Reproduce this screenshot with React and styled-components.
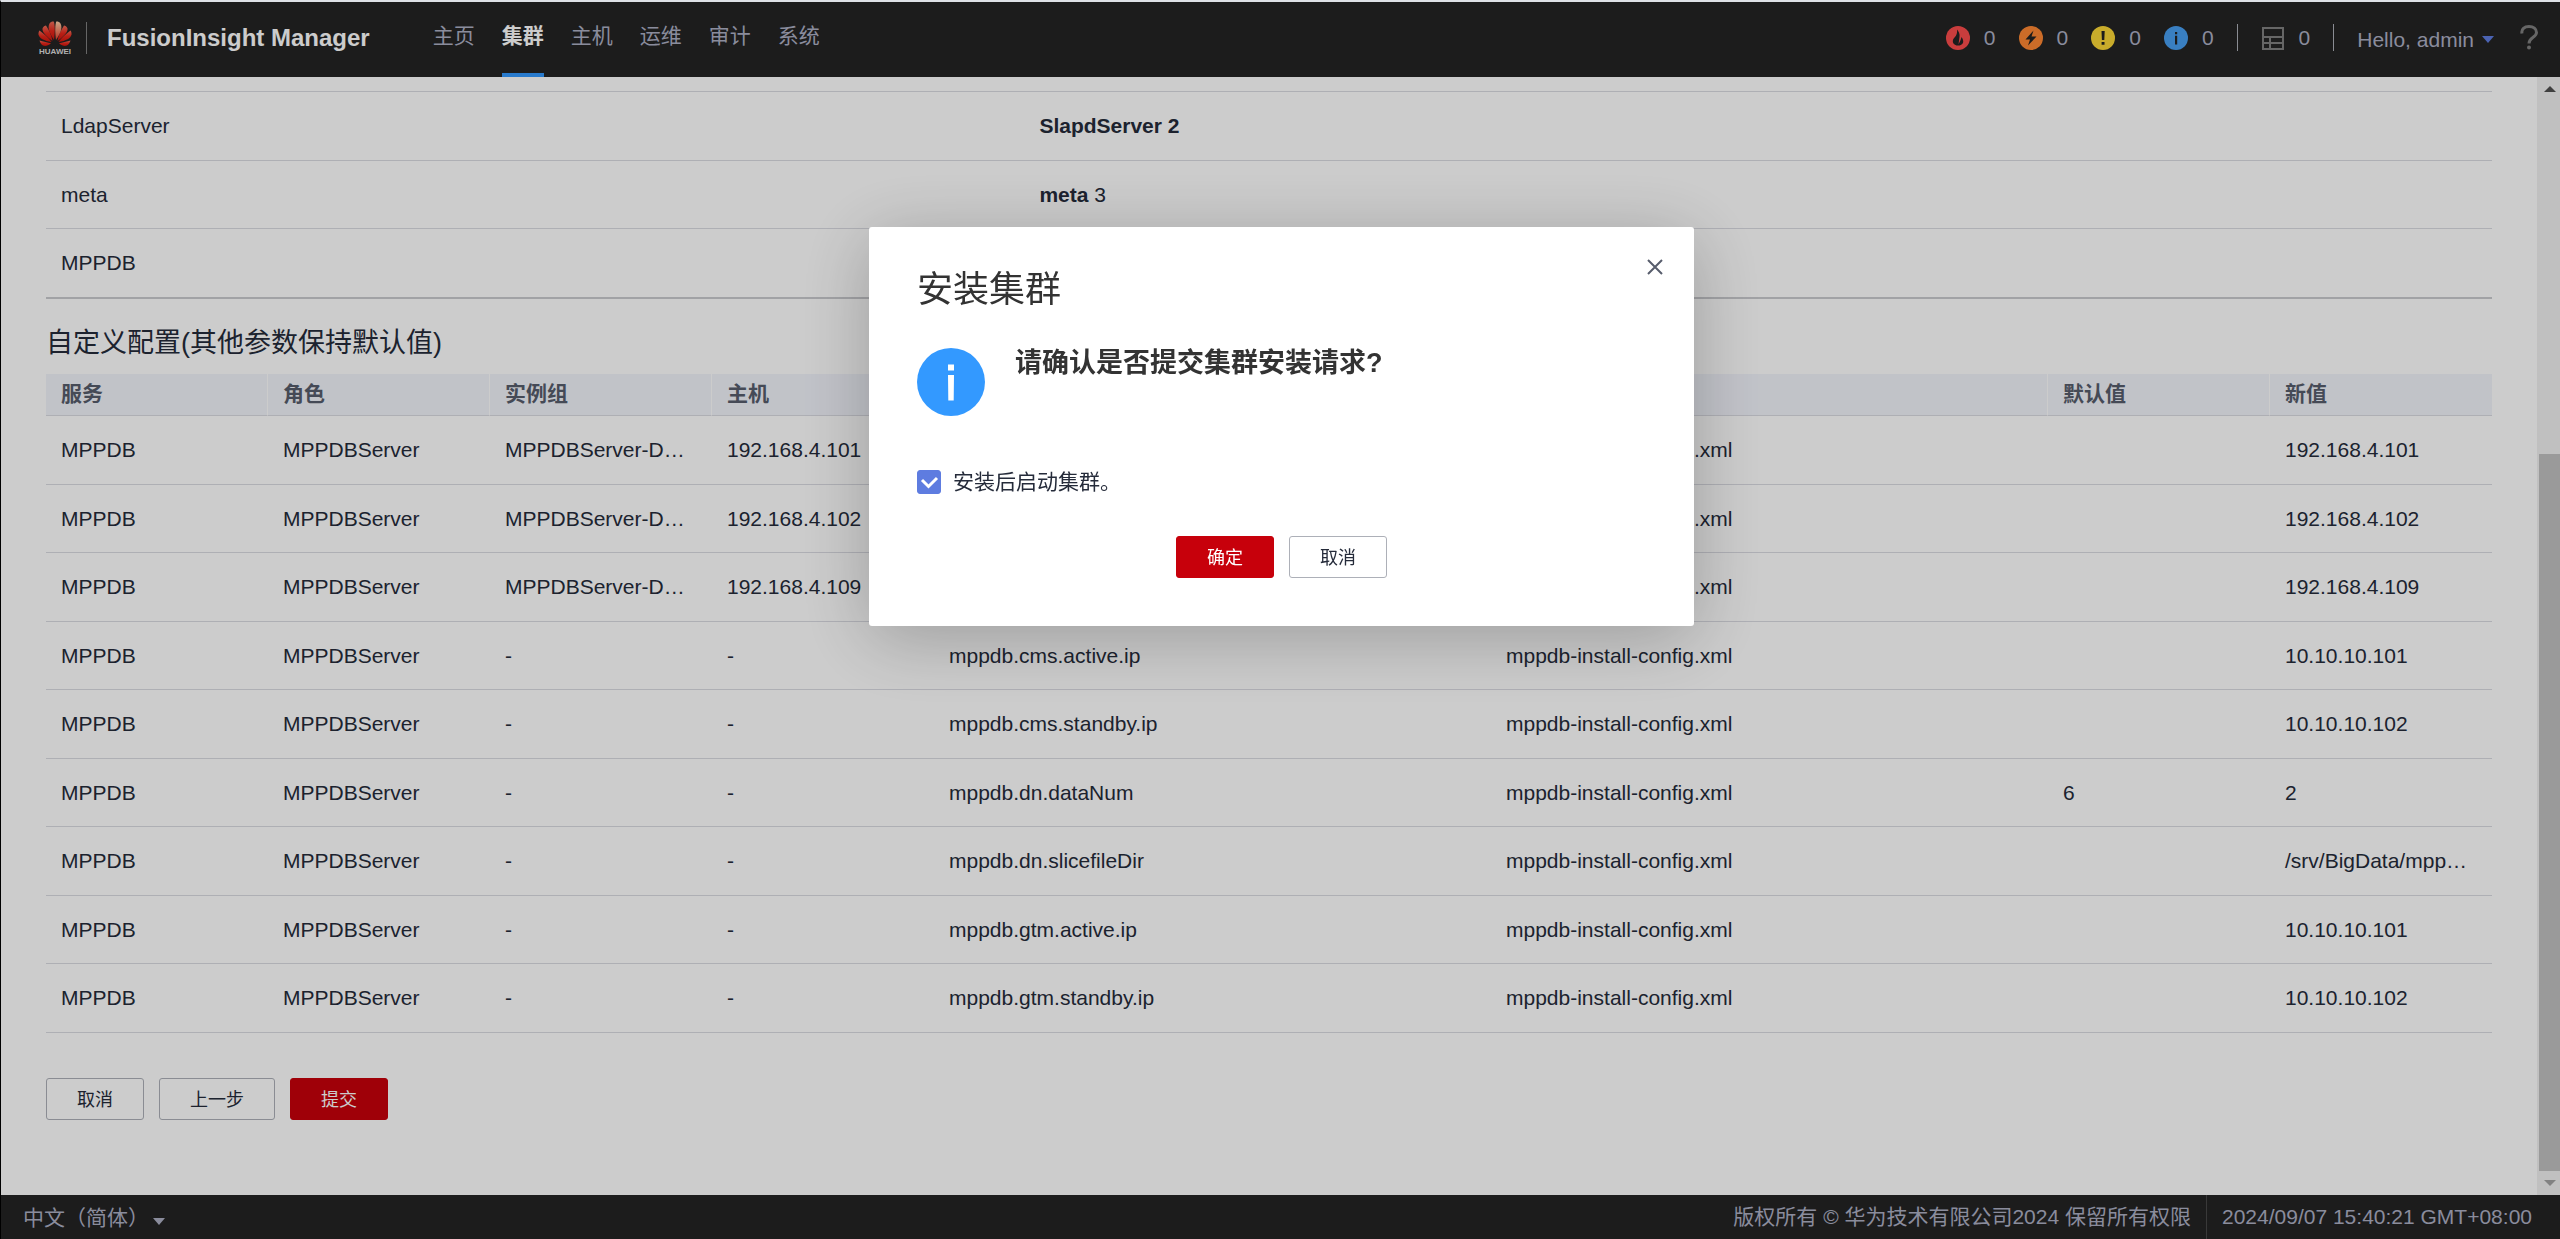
import React, { useState } from "react";
import styled, { createGlobalStyle } from "styled-components";

const navItems = ["主页", "集群", "主机", "运维", "审计", "系统"];

const columns = ["服务", "角色", "实例组", "主机", "", "", "默认值", "新值"];

const file = "mppdb-install-config.xml";

const configs = [
    ["MPPDBServer-D…", "192.168.4.101", "", "", "192.168.4.101"],
    ["MPPDBServer-D…", "192.168.4.102", "", "", "192.168.4.102"],
    ["MPPDBServer-D…", "192.168.4.109", "", "", "192.168.4.109"],
    ["-", "-", "mppdb.cms.active.ip", "", "10.10.10.101"],
    ["-", "-", "mppdb.cms.standby.ip", "", "10.10.10.102"],
    ["-", "-", "mppdb.dn.dataNum", "6", "2"],
    ["-", "-", "mppdb.dn.slicefileDir", "", "/srv/BigData/mpp…"],
    ["-", "-", "mppdb.gtm.active.ip", "", "10.10.10.101"],
    ["-", "-", "mppdb.gtm.standby.ip", "", "10.10.10.102"],
];

const Logo = () => (
    <svg width="34" height="34" viewBox="0 0 34 34" aria-label="HUAWEI">
        <defs>
            <linearGradient id="petal" x1="0" y1="0" x2="0" y2="1">
                <stop offset="0" stopColor="#f0705c" />
                <stop offset="0.5" stopColor="#e8281c" />
                <stop offset="1" stopColor="#d0140c" />
            </linearGradient>
            <linearGradient id="petalLight" x1="0" y1="0" x2="0" y2="1">
                <stop offset="0" stopColor="#ffd0a8" />
                <stop offset="1" stopColor="#e8402c" />
            </linearGradient>
        </defs>
        <g fill="url(#petal)">
            <path d="M16 19C12 13 9 7 11.500 2.500C13 0.500 15.500 0 16 1C17 5 17 12 16 19Z" />
            <path d="M14.500 20C8 15 4 11 4.500 7.500C5 5.500 7 4.500 8 4.500C11 9 13.500 14 14.500 20Z" />
            <path d="M19.500 20C26 15 30 11 29.500 7.500C29 5.500 27 4.500 26 4.500C23 9 20.500 14 19.500 20Z" />
            <path d="M13.500 21C6 20 1 17 0.500 13.500C0.300 11.500 1 10 1.500 9.500C6 13 11 17 13.500 21Z" />
            <path d="M20.500 21C28 20 33 17 33.500 13.500C33.700 11.500 33 10 32.500 9.500C28 13 23 17 20.500 21Z" />
            <path d="M13 22.300C10 25 7 25.500 5 24.500C3 23.500 2 21 1.500 19.500C5 20.500 10 21.500 13 22.300Z" />
            <path d="M21 22.300C24 25 27 25.500 29 24.500C31 23.500 32 21 32.500 19.500C29 20.500 24 21.500 21 22.300Z" />
        </g>
        <path
            d="M18 19C22 13 25 7 22.500 2.500C21 0.500 18.500 0 18 1C17 5 17 12 18 19Z"
            fill="url(#petalLight)"
        />
        <text x="17" y="33" textAnchor="middle" fontSize="8" fontWeight="700" fill="#dddddd">
            HUAWEI
        </text>
    </svg>
);

const alarms = [
    {
        name: "紧急",
        color: "#fc4d4d",
        glyph: (
            <path
                d="M11 3.500C13 6 14 8 13.500 11L12.500 18.500C13.500 16 15 14 15.500 11C18.500 15 17.500 18.500 13.500 19.500H10.500C6 18 6 14 8.500 11.500C10.500 9.500 11.500 7 11 3.500Z"
                fill="#232323"
            />
        ),
    },
    {
        name: "重要",
        color: "#ff8833",
        glyph: <path d="M14.500 4.500L6.500 13.500H11L9 19.500L17.500 10.500H12.500Z" fill="#232323" />,
    },
    {
        name: "次要",
        color: "#fcd836",
        glyph: (
            <path d="M10.500 5H13.700L13.300 14H10.900ZM10.600 16H13.500V18.800H10.600Z" fill="#232323" />
        ),
    },
    {
        name: "提示",
        color: "#489ff2",
        glyph: <path d="M11 6H13.200V8.200H11ZM11 9.800H13.200V18.500H11Z" fill="#232323" />,
    },
];

const Caret = ({ color }) => (
    <svg width="12" height="7" viewBox="0 0 12 7" aria-hidden="true">
        <path d="M0 0H12L6 7Z" fill={color} />
    </svg>
);

const App = () => {
    const [open, setOpen] = useState(true);
    const [start, setStart] = useState(true);

    return (
        <Page>
            <GlobalStyle />
            <Header>
                <Brand>
                    <Logo />
                    <BrandLine />
                    <h1>FusionInsight Manager</h1>
                </Brand>
                <Nav>
                    {navItems.map((item) => (
                        <NavLink key={item} href="#" $active={item === "集群"}>
                            {item}
                        </NavLink>
                    ))}
                </Nav>
                <Status>
                    {alarms.map(({ name, color, glyph }) => (
                        <Count key={name} href="#">
                            <svg width="24" height="24" viewBox="0 0 24 24" aria-label={name}>
                                <circle cx="12" cy="12" r="12" fill={color} />
                                {glyph}
                            </svg>
                            0
                        </Count>
                    ))}
                    <Divider />
                    <Count href="#">
                        <svg
                            width="24"
                            height="24"
                            viewBox="0 0 24 24"
                            fill="none"
                            stroke="#808080"
                            strokeWidth="2"
                            aria-label="任务"
                        >
                            <path d="M2 2H22V23H2ZM2 11H22M2 17H22M9 11V23" />
                        </svg>
                        0
                    </Count>
                    <Divider />
                    <UserButton type="button">
                        Hello, admin
                        <Caret color="#5e7ce0" />
                    </UserButton>
                    <HelpButton type="button" aria-label="帮助">
                        <svg width="18" height="25" viewBox="0 0 18 25">
                            <path
                                d="M2 8.500C1 4 4.500 1.500 9 1.500C13.500 1.500 16.500 4 16.500 7.500C16.500 12.500 9 12 9 18.500"
                                fill="none"
                                stroke="#808080"
                                strokeWidth="3"
                            />
                            <circle cx="9" cy="22.500" r="2" fill="#808080" />
                        </svg>
                    </HelpButton>
                </Status>
            </Header>

            <Body>
                <Content>
                    <SummaryTable>
                        <tbody>
                            <tr>
                                <td>LdapServer</td>
                                <td>
                                    <b>SlapdServer 2</b>
                                </td>
                            </tr>
                            <tr>
                                <td>meta</td>
                                <td>
                                    <b>meta</b> 3
                                </td>
                            </tr>
                            <tr>
                                <td>MPPDB</td>
                                <td></td>
                            </tr>
                        </tbody>
                    </SummaryTable>

                    <h2>自定义配置(其他参数保持默认值)</h2>
                    <ConfigTable>
                        <thead>
                            <tr>
                                {columns.map((column, i) => (
                                    <th key={i}>{column}</th>
                                ))}
                            </tr>
                        </thead>
                        <tbody>
                            {configs.map(([group, host, param, initial, value], i) => (
                                <tr key={i}>
                                    <td>MPPDB</td>
                                    <td>MPPDBServer</td>
                                    <td>{group}</td>
                                    <td>{host}</td>
                                    <td>{param}</td>
                                    <td>{file}</td>
                                    <td>{initial}</td>
                                    <td>{value}</td>
                                </tr>
                            ))}
                        </tbody>
                    </ConfigTable>

                    <Actions>
                        <Button type="button">取消</Button>
                        <Button type="button">上一步</Button>
                        <Button type="button" $primary onClick={() => setOpen(true)}>
                            提交
                        </Button>
                    </Actions>
                </Content>

                <Scrollbar aria-hidden="true">
                    <ScrollArrow>
                        <svg width="12" height="6" viewBox="0 0 12 6">
                            <path d="M0 6H12L6 0Z" fill="#505050" />
                        </svg>
                    </ScrollArrow>
                    <ScrollGap />
                    <ScrollThumb />
                    <ScrollArrow>
                        <svg width="12" height="6" viewBox="0 0 12 6">
                            <path d="M0 0H12L6 6Z" fill="#a3a3a3" />
                        </svg>
                    </ScrollArrow>
                </Scrollbar>
            </Body>

            <Footer>
                <Language>
                    <select aria-label="语言">
                        <option>中文（简体）</option>
                    </select>
                    <Caret color="#adb0c4" />
                </Language>
                <Copyright>版权所有 © 华为技术有限公司2024 保留所有权限</Copyright>
                <Clock>2024/09/07 15:40:21 GMT+08:00</Clock>
            </Footer>

            {open && (
                <Backdrop>
                    <Dialog role="dialog" aria-modal="true" aria-labelledby="dialog-title">
                        <DialogHead>
                            <h2 id="dialog-title">安装集群</h2>
                            <CloseButton
                                type="button"
                                aria-label="关闭"
                                onClick={() => setOpen(false)}
                            >
                                <svg width="16" height="16" viewBox="0 0 16 16">
                                    <path
                                        d="M1 1L15 15M15 1L1 15"
                                        stroke="#575d6c"
                                        strokeWidth="2"
                                    />
                                </svg>
                            </CloseButton>
                        </DialogHead>
                        <Message>
                            <svg width="68" height="68" viewBox="0 0 68 68" aria-hidden="true">
                                <circle cx="34" cy="34" r="34" fill="#3399ff" />
                                <path
                                    d="M31 16.500H37V22.500H31ZM31 27H37L36.700 52.500H31.300Z"
                                    fill="#ffffff"
                                />
                            </svg>
                            <strong>请确认是否提交集群安装请求?</strong>
                        </Message>
                        <CheckLabel>
                            <Checkbox
                                type="checkbox"
                                checked={start}
                                onChange={(e) => setStart(e.target.checked)}
                            />
                            <CheckMark viewBox="0 0 24 24" aria-hidden="true">
                                <path
                                    d="M5 10L11.500 16.500L20 8"
                                    fill="none"
                                    stroke="#ffffff"
                                    strokeWidth="3"
                                />
                            </CheckMark>
                            安装后启动集群。
                        </CheckLabel>
                        <DialogButtons>
                            <Button type="button" $primary onClick={() => setOpen(false)}>
                                确定
                            </Button>
                            <Button type="button" onClick={() => setOpen(false)}>
                                取消
                            </Button>
                        </DialogButtons>
                    </Dialog>
                </Backdrop>
            )}
        </Page>
    );
};

const GlobalStyle = createGlobalStyle`
    * {
        box-sizing: border-box;
    }

    body {
        margin: 0;
        color: #252b3a;
        background: #ffffff;
    }

    body,
    button,
    select {
        font-family: "Liberation Sans", "Noto Sans CJK SC", sans-serif;
        font-size: 21px;
    }

    h1,
    h2 {
        margin: 0;
    }

    svg {
        flex: none;
        display: block;
    }
`;

const Page = styled.div`
    min-height: 100vh;
    display: flex;
    flex-direction: column;
    border-top: 2px solid #dee1e6;
    border-left: 1px solid #000000;
`;

const Header = styled.header`
    display: flex;
    align-items: center;
    height: 75px;
    padding: 0 22px 0 37px;
    color: #adb0c4;
    background: #232323;
`;

const Brand = styled.div`
    display: flex;
    align-items: center;
    padding-bottom: 3px;

    h1 {
        font-size: 24px;
        line-height: 36px;
        color: #ffffff;
    }
`;

const BrandLine = styled.span`
    width: 1px;
    height: 32px;
    margin: 0 20px 0 14px;
    background: #808080;
`;

const Nav = styled.nav`
    display: flex;
    align-self: stretch;
    gap: 27px;
    margin-left: 63px;
`;

const NavLink = styled.a`
    line-height: 68px;
    text-decoration: none;
    color: ${(p) => (p.$active ? "#ffffff" : "#adb0c4")};
    font-weight: ${(p) => (p.$active ? 700 : 400)};
    border-bottom: 4px solid ${(p) => (p.$active ? "#3399ff" : "transparent")};
`;

const Status = styled.div`
    display: flex;
    align-items: center;
    gap: 23px;
    margin-left: auto;
    padding-bottom: 4px;
`;

const Count = styled.a`
    display: flex;
    align-items: center;
    gap: 14px;
    line-height: 27px;
    color: inherit;
    text-decoration: none;
`;

const Divider = styled.span`
    width: 1px;
    height: 27px;
    background: #adb0b8;
`;

const UserButton = styled.button`
    display: flex;
    align-items: center;
    gap: 8px;
    padding: 4px 0 0;
    border: 0;
    color: inherit;
    background: none;
`;

const HelpButton = styled.button`
    padding: 0 0 0 3px;
    border: 0;
    background: none;
`;

const Body = styled.div`
    flex: 1;
    display: flex;
`;

const Content = styled.main`
    flex: 1;
    min-width: 0;
    padding: 14px 45px 75px;

    > h2 {
        margin: 24px 0 11px;
        font-size: 27px;
        font-weight: 400;
        line-height: 40px;
    }
`;

const Table = styled.table`
    width: 100%;
    table-layout: fixed;
    border-spacing: 0;

    th,
    td {
        padding: 0 15px;
        text-align: left;
        white-space: nowrap;
        overflow: hidden;
        text-overflow: ellipsis;
        border-bottom: 1px solid #dadbe2;
    }

    tbody td {
        height: 69px;
    }

    tbody tr:nth-child(even) td {
        height: 68px;
    }
`;

const SummaryTable = styled(Table)`
    border-top: 1px solid #dadbe2;

    td:first-child {
        width: 40%;
    }

    tbody tr:last-child td {
        height: 70px;
        border-bottom: 2px solid #cacbcf;
    }
`;

const ConfigTable = styled(Table)`
    th {
        width: 222px;
        height: 42px;
        padding-bottom: 2px;
        line-height: 38px;
        color: #575d6c;
        background: #f2f4fb;
        border-right: 1px solid #ffffff;
    }

    th:nth-child(5),
    th:nth-child(6) {
        width: auto;
    }

    th:last-child {
        border-right: 0;
    }
`;

const Actions = styled.div`
    display: flex;
    gap: 15px;
    margin-top: 45px;
`;

const Button = styled.button`
    height: 42px;
    padding: 0 30px 3px;
    font-size: 18px;
    border: 1px solid ${(p) => (p.$primary ? "#c7000b" : "#adb0b8")};
    border-radius: 3px;
    color: ${(p) => (p.$primary ? "#ffffff" : "#252b3a")};
    background: ${(p) => (p.$primary ? "#c7000b" : "#ffffff")};
`;

const Scrollbar = styled.div`
    width: 23px;
    display: flex;
    flex-direction: column;
    padding-left: 2px;
    background: #f1f1f1;
`;

const ScrollArrow = styled.div`
    display: flex;
    align-items: center;
    justify-content: center;
    height: 24px;
`;

const ScrollGap = styled.div`
    flex: 353;
`;

const ScrollThumb = styled.div`
    flex: 717;
    background: #c1c1c1;
`;

const Footer = styled.footer`
    display: flex;
    align-items: center;
    height: 44px;
    padding: 0 28px 0 22px;
    line-height: 44px;
    color: #adb0c4;
    background: #232323;
`;

const Language = styled.label`
    display: flex;
    align-items: center;
    gap: 4px;

    select {
        width: 126px;
        height: 32px;
        padding: 0;
        border: 0;
        appearance: none;
        color: inherit;
        background: none;
    }

    svg {
        margin-top: 8px;
    }
`;

const Copyright = styled.span`
    margin-left: auto;
    padding-right: 15px;
    border-right: 1px solid #484848;
`;

const Clock = styled.time`
    padding-left: 15px;
`;

const Backdrop = styled.div`
    position: fixed;
    inset: 2px 0 0;
    display: flex;
    justify-content: center;
    align-items: flex-start;
    padding: 225px 0 0 3px;
    background: rgba(0, 0, 0, 0.2);
`;

const Dialog = styled.section`
    width: 825px;
    padding: 32px 48px 48px;
    border-radius: 3px;
    background: #ffffff;
    box-shadow: 0 12px 72px rgba(0, 0, 0, 0.24);
`;

const DialogHead = styled.div`
    display: flex;
    align-items: flex-start;
    justify-content: space-between;

    h2 {
        font-size: 36px;
        font-weight: 400;
        line-height: 62px;
        color: #333333;
    }
`;

const CloseButton = styled.button`
    margin-right: -17px;
    padding: 0;
    border: 0;
    background: none;
`;

const Message = styled.div`
    display: flex;
    gap: 30px;
    margin-top: 27px;

    strong {
        font-size: 27px;
        line-height: 30px;
        color: #333333;
    }
`;

const CheckLabel = styled.label`
    position: relative;
    display: flex;
    align-items: center;
    gap: 12px;
    height: 24px;
    margin-top: 54px;
    line-height: 24px;
`;

const Checkbox = styled.input`
    appearance: none;
    width: 24px;
    height: 24px;
    margin: 0;
    border: 1px solid #5e7ce0;
    border-radius: 3px;

    &:checked {
        background: #5e7ce0;
    }
`;

/* the tick lies over the box */
const CheckMark = styled.svg`
    position: absolute;
    top: 0;
    left: 0;
    width: 24px;
    height: 24px;
    pointer-events: none;
`;

const DialogButtons = styled.div`
    display: flex;
    justify-content: center;
    gap: 15px;
    margin-top: 42px;
`;

export default App;
